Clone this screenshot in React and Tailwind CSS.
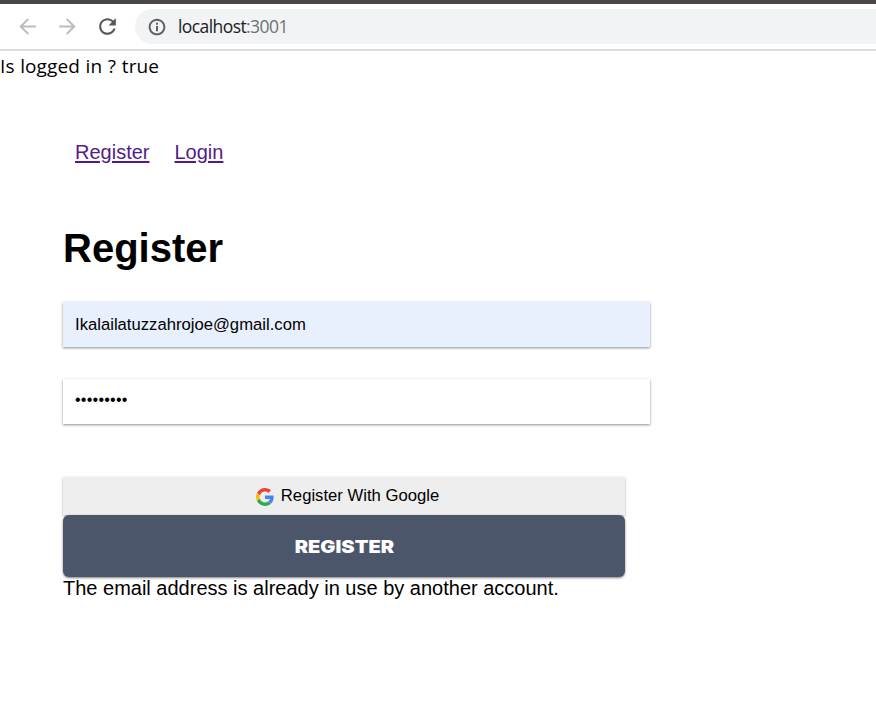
function Icon({ d, size, className }) {
  return (
    <svg viewBox="0 0 24 24" width={size} height={size} fill="currentColor" className={className}>
      <path d={d} />
    </svg>
  );
}

const BACK = "M20 11.1H7.83l5.59-5.69L12.2 4.1l-8.1 7.9 8.1 7.9 1.21-1.31L7.83 12.9H20z";
const FORWARD = "M4 11.1h12.17l-5.59-5.69L11.8 4.1l8.1 7.9-8.1 7.9-1.21-1.31 5.58-5.69H4z";
const RELOAD =
  "M17.65 6.35C16.2 4.9 14.21 4 12 4c-4.42 0-7.99 3.58-7.99 8s3.57 8 7.99 8c3.73 0 6.84-2.55 7.73-6h-2.08c-.82 2.33-3.04 4-5.65 4-3.31 0-6-2.69-6-6s2.69-6 6-6c1.66 0 3.14.69 4.22 1.78L13 11h7V4l-2.35 2.35z";
const INFO =
  "M10.8 10.8h2.4V17h-2.4zM10.8 7h2.4v2.4h-2.4zM12 2C6.48 2 2 6.48 2 12s4.48 10 10 10 10-4.48 10-10S17.52 2 12 2zm0 17.6c-4.2 0-7.6-3.4-7.6-7.6s3.4-7.6 7.6-7.6 7.6 3.4 7.6 7.6-3.4 7.6-7.6 7.6z";

function GoogleLogo() {
  return (
    <svg viewBox="0 0 48 48" width="18" height="18" className="mt-[2px] shrink-0">
      <path fill="#EA4335" d="M24 9.5c3.54 0 6.71 1.22 9.21 3.6l6.85-6.85C35.9 2.38 30.47 0 24 0 14.62 0 6.51 5.38 2.56 13.22l7.98 6.19C12.43 13.72 17.74 9.5 24 9.5z" />
      <path fill="#4285F4" d="M46.98 24.55c0-1.57-.15-3.09-.38-4.55H24v9.02h12.94c-.58 2.96-2.26 5.48-4.78 7.18l7.73 6c4.51-4.18 7.09-10.36 7.09-17.65z" />
      <path fill="#FBBC05" d="M10.53 28.59c-.48-1.45-.76-2.99-.76-4.59s.27-3.14.76-4.59l-7.98-6.19C.92 16.46 0 20.12 0 24c0 3.88.92 7.54 2.56 10.78l7.97-6.19z" />
      <path fill="#34A853" d="M24 48c6.48 0 11.93-2.13 15.89-5.81l-7.73-6c-2.15 1.45-4.92 2.3-8.16 2.3-6.26 0-11.57-4.22-13.47-9.91l-7.98 6.19C6.51 42.62 14.62 48 24 48z" />
    </svg>
  );
}

export default function App() {
  return (
    <div className="h-[716px] overflow-hidden bg-white font-['Liberation_Sans',Arial,sans-serif] text-black">
      <header className="flex h-[51px] items-center border-t-4 border-b-2 border-t-[#4a4647] border-b-[#dadce0] bg-white pl-[15px]">
        <Icon d={BACK} size={25} className="text-[#babcbe]" />
        <Icon d={FORWARD} size={25} className="ml-[15px] text-[#babcbe]" />
        <Icon d={RELOAD} size={25} className="ml-[15px] text-[#54575b]" />
        <div className="ml-[15px] flex h-[35px] flex-1 items-center rounded-l-full bg-[#f1f3f4] pl-[12px]">
          <Icon d={INFO} size={20} className="text-[#5f6368]" />
          <span className="ml-[11px] font-['Open_Sans','Noto_Sans',sans-serif] text-[17.5px] tracking-[-0.58px] text-[#202124]">
            localhost<span className="text-[#6d7175]">:3001</span>
          </span>
        </div>
      </header>

      <p className="h-[30px] font-['Open_Sans','Noto_Sans',sans-serif] text-[19px] leading-[30px] tracking-[0.1px] [word-spacing:0.6px]">
        Is logged in ? true
      </p>

      <main className="pl-[63px]">
        <nav className="flex gap-[25px] pt-[59px] pl-[12px] text-[20px] leading-[24px] text-[#551a8b]">
          <a href="#register" className="underline decoration-2 underline-offset-2">Register</a>
          <a href="#login" className="underline decoration-2 underline-offset-2">Login</a>
        </nav>

        <h1 className="mt-[60px] text-[40px] leading-[48px] font-bold">Register</h1>

        <form>
          <input
            type="text"
            readOnly
            value="Ikalailatuzzahrojoe@gmail.com"
            className="mt-[30px] block h-[45px] w-[587px] bg-[#e8f0fe] px-[12px] text-[16.67px] shadow-[0_1px_3px_rgba(0,0,0,0.24),0_1px_2px_rgba(0,0,0,0.24)] outline-none"
          />
          <div className="mt-[32px] flex h-[45px] w-[587px] items-center px-[12px] pb-[4px] text-[16px] shadow-[0_1px_3px_rgba(0,0,0,0.24),0_1px_2px_rgba(0,0,0,0.24)]">
            <span className="tracking-[0.25px]">•••••••••</span>
          </div>

          <button
            type="button"
            className="mt-[53px] flex h-[38px] w-[562px] items-center justify-center gap-[7px] bg-[#eeeeee] pl-[7px] text-[16.67px] shadow-[0_1px_3px_rgba(0,0,0,0.18),0_1px_2px_rgba(0,0,0,0.16)]"
          >
            <GoogleLogo />
            <span className="pb-[2px]">Register With Google</span>
          </button>
          <button
            type="button"
            className="relative block h-[62px] w-[562px] rounded-[6px] bg-[#4b566b] pt-[2px] font-['Inter','Liberation_Sans',sans-serif] text-[17.5px] font-black text-white shadow-[0_1px_3px_rgba(0,0,0,0.24),0_1px_2px_rgba(0,0,0,0.3)]"
          >
            <span className="inline-block scale-x-[1.145]">REGISTER</span>
          </button>
        </form>
        <p className="text-[20px] leading-[23px]">The email address is already in use by another account.</p>
      </main>
    </div>
  );
}
